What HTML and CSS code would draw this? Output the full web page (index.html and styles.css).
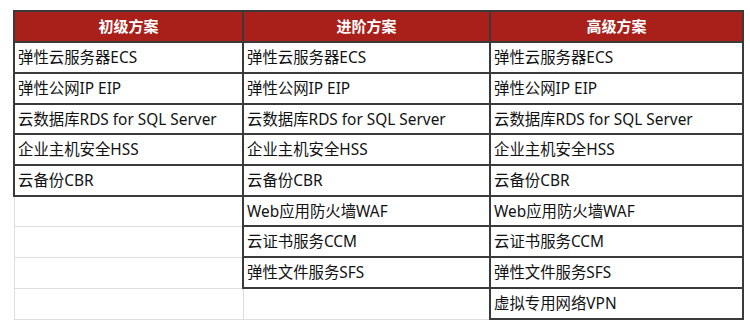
FILE: index.html
```html
<!DOCTYPE html>
<html lang="zh-CN">
<head>
<meta charset="utf-8">
<title>方案对比</title>
<link rel="stylesheet" href="styles.css">
</head>
<body>
<div class="sheet">
<table class="plans">
  <colgroup>
    <col class="c1"><col class="c2"><col class="c3">
  </colgroup>
  <thead>
    <tr class="r-head">
      <th>初级方案</th><th>进阶方案</th><th>高级方案</th>
    </tr>
  </thead>
  <tbody>
    <tr class="r31"><td class="on">弹性云服务器ECS</td><td class="on">弹性云服务器ECS</td><td class="on">弹性云服务器ECS</td></tr>
    <tr class="r31"><td class="on">弹性公网IP EIP</td><td class="on">弹性公网IP EIP</td><td class="on">弹性公网IP EIP</td></tr>
    <tr class="r30"><td class="on">云数据库RDS for SQL Server</td><td class="on">云数据库RDS for SQL Server</td><td class="on">云数据库RDS for SQL Server</td></tr>
    <tr class="r31"><td class="on">企业主机安全HSS</td><td class="on">企业主机安全HSS</td><td class="on">企业主机安全HSS</td></tr>
    <tr class="r31"><td class="on">云备份CBR</td><td class="on">云备份CBR</td><td class="on">云备份CBR</td></tr>
    <tr class="r30"><td class="off"></td><td class="on">Web应用防火墙WAF</td><td class="on">Web应用防火墙WAF</td></tr>
    <tr class="r31"><td class="off"></td><td class="on">云证书服务CCM</td><td class="on">云证书服务CCM</td></tr>
    <tr class="r31"><td class="off"></td><td class="on">弹性文件服务SFS</td><td class="on">弹性文件服务SFS</td></tr>
    <tr class="r31"><td class="off"></td><td class="off"></td><td class="on">虚拟专用网络VPN</td></tr>
  </tbody>
</table>
</div>
</body>
</html>
```
FILE: styles.css
```css
html, body {
  margin: 0;
  padding: 0;
  background: #ffffff;
}
.sheet {
  padding: 10px 0 0 13px;
}
.plans {
  border-collapse: collapse;
  table-layout: fixed;
  width: 729px;
  font-family: "Noto Sans", "Noto Sans CJK SC", sans-serif;
  font-size: 15.4px;
  color: #111111;
}
.c1 { width: 229px; }
.c2 { width: 247px; }
.c3 { width: 253px; }
.r-head { height: 31px; }
.r31 { height: 31px; }
.r30 { height: 30px; }
.plans th {
  background: #a9201b;
  color: #ffffff;
  font-weight: 700;
  font-size: 15px;
  text-align: center;
  border: 2px solid #3a3a3a;
  padding: 0;
  line-height: 1;
}
.plans td {
  padding: 1px 0 0 3px;
  line-height: 1;
  white-space: nowrap;
  overflow: hidden;
  vertical-align: middle;
}
.plans td.on {
  border: 2px solid #3a3a3a;
}
.plans td.off {
  border: 1px solid #dedede;
}
```
